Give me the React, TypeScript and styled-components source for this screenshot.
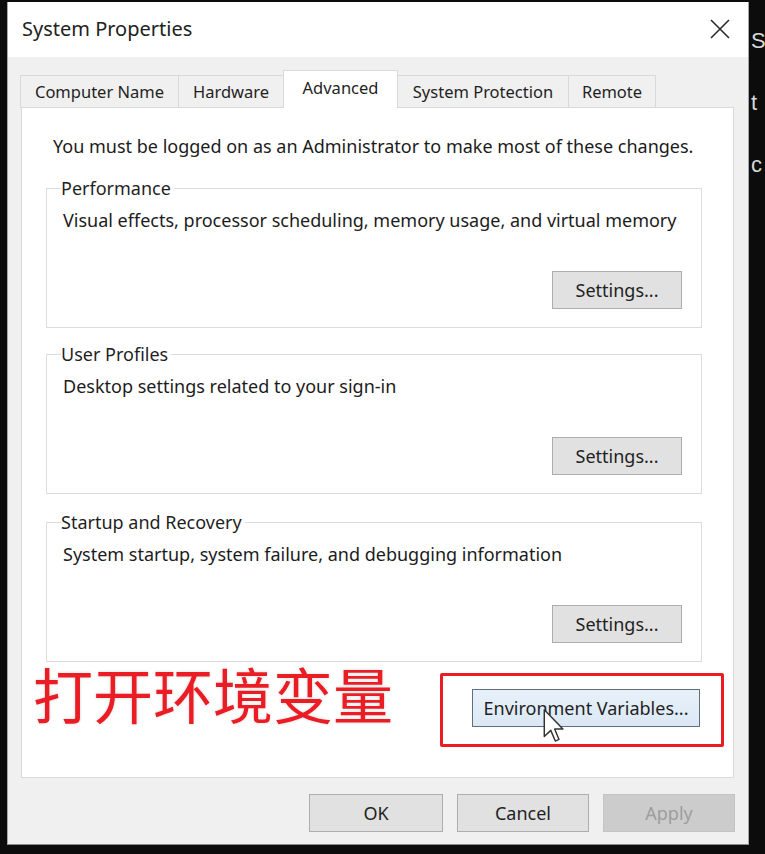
import React from "react";
import styled, { createGlobalStyle } from "styled-components";

const Global = createGlobalStyle`
  html, body { margin: 0; padding: 0; background: #0c0c0c; }
  body { font-family: "Noto Sans", "Open Sans", Arial, sans-serif; }
  * { box-sizing: border-box; }
`;

const Page = styled.div`
  width: 765px;
  height: 854px;
  display: flex;
  background: #0c0c0c;
  overflow: hidden;
`;

const LeftStrip = styled.div`
  width: 7px;
  flex: none;
`;

const RightStrip = styled.div`
  flex: 1;
  display: flex;
  flex-direction: column;
  padding-top: 10px;
  padding-left: 2px;
`;

const Ghost = styled.span`
  font-family: "Liberation Sans", Arial, sans-serif;
  font-size: 22px;
  line-height: 62px;
  color: #d8d8d8;
`;

const Window = styled.div`
  width: 742px;
  height: 843px;
  margin-top: 2px;
  flex: none;
  background: #f0f0f0;
  border-left: 1px solid #a8a8a8;
  border-right: 1px solid #a8a8a8;
  border-bottom: 1px solid #8a8a8a;
  display: flex;
  flex-direction: column;
  color: #1c1c1c;
`;

const TitleBar = styled.div`
  height: 55px;
  flex: none;
  background: #ffffff;
  display: flex;
  align-items: center;
  justify-content: space-between;
  padding: 0 17px 2px 14px;
`;

const Title = styled.div`
  font-size: 20px;
  color: #222;
`;

const CloseBtn = styled.div`
  width: 22px;
  height: 22px;
  display: flex;
  align-items: center;
  justify-content: center;
`;

const TabRow = styled.div`
  display: flex;
  align-items: flex-end;
  height: 38px;
  margin: 13px 0 -1px 13px;
  position: relative;
  z-index: 1;
`;

const Tab = styled.div<{ $w: number; $active?: boolean }>`
  width: ${(p) => p.$w}px;
  height: ${(p) => (p.$active ? 38 : 33)}px;
  margin-left: -1px;
  background: ${(p) => (p.$active ? "#ffffff" : "#f0f0f0")};
  border: 1px solid #d9d9d9;
  border-bottom: ${(p) => (p.$active ? "none" : "1px solid #d9d9d9")};
  display: flex;
  align-items: center;
  justify-content: center;
  padding-bottom: ${(p) => (p.$active ? 4 : 0)}px;
  font-size: 16.5px;
  color: #1f1f1f;
  white-space: nowrap;
  position: relative;
  z-index: ${(p) => (p.$active ? 2 : 1)};
`;

const Panel = styled.div`
  width: 713px;
  height: 671px;
  margin-left: 13px;
  background: #ffffff;
  border: 1px solid #d9d9d9;
  padding: 27px 31px 0 24px;
  display: flex;
  flex-direction: column;
`;

const Notice = styled.div`
  font-size: 18px;
  line-height: 22px;
  margin-left: 7px;
  white-space: nowrap;
`;

const Group = styled.fieldset<{ $top: number }>`
  margin: ${(p) => p.$top}px 0 0 0;
  padding: 0 19px 0 14px;
  border: 1px solid #dcdcdc;
  height: 151px;
  min-width: 0;
`;

const Legend = styled.legend`
  font-size: 18px;
  line-height: 22px;
  padding: 0 3px 0 0;
  color: #1f1f1f;
`;

const Desc = styled.div`
  font-size: 18px;
  line-height: 22px;
  margin-top: 10px;
  margin-left: 2px;
  white-space: nowrap;
`;

const ButtonRow = styled.div`
  display: flex;
  justify-content: flex-end;
  margin-top: 40px;
`;

const Button = styled.div<{ $w: number; $disabled?: boolean }>`
  width: ${(p) => p.$w}px;
  height: 38px;
  display: flex;
  align-items: center;
  justify-content: center;
  font-size: 18px;
  background: ${(p) => (p.$disabled ? "#cccccc" : "#e1e1e1")};
  border: 1px solid ${(p) => (p.$disabled ? "#c4c4c4" : "#adadad")};
  color: ${(p) => (p.$disabled ? "#9d9d9d" : "#1f1f1f")};
  white-space: nowrap;
`;

const EnvRow = styled.div`
  display: flex;
  justify-content: space-between;
  align-items: flex-start;
  margin: 11px -22px 0 -13px;
`;

const Caption = styled.div`
  font-family: "Noto Sans CJK SC", "Noto Sans", sans-serif;
  font-size: 60px;
  line-height: 58px;
  margin-top: -9px;
  letter-spacing: 0px;
  color: #ea1c24;
  text-shadow: 0 0 2px #ffffff, 0 0 3px #c8c8c8;
  white-space: nowrap;
`;

const Highlight = styled.div`
  border: 3px solid #ec1c24;
  border-radius: 2px;
  padding: 13px 21px 17px 29px;
  display: flex;
`;

const EnvButton = styled.div`
  width: 228px;
  height: 38px;
  display: flex;
  align-items: center;
  justify-content: center;
  font-size: 18px;
  background: linear-gradient(#e8f1fa, #dbe8f4);
  border: 1px solid #5f6f80;
  color: #1f1f1f;
  position: relative;
  white-space: nowrap;
`;

const Cursor = styled.svg`
  position: absolute;
  left: 70px;
  top: 19px;
`;

const Footer = styled.div`
  display: flex;
  justify-content: flex-end;
  gap: 14px;
  margin-top: 16px;
  padding-right: 13px;
`;

const groups = [
  {
    title: "Performance",
    desc: "Visual effects, processor scheduling, memory usage, and virtual memory",
    top: 20,
  },
  { title: "User Profiles", desc: "Desktop settings related to your sign-in", top: 15 },
  {
    title: "Startup and Recovery",
    desc: "System startup, system failure, and debugging information",
    top: 17,
  },
];

const tabs = [
  { label: "Computer Name", w: 159 },
  { label: "Hardware", w: 106 },
  { label: "Advanced", w: 115, active: true },
  { label: "System Protection", w: 172 },
  { label: "Remote", w: 88 },
];

export default function App() {
  return (
    <Page>
      <Global />
      <LeftStrip />
      <Window>
        <TitleBar>
          <Title>System Properties</Title>
          <CloseBtn>
            <svg width="20" height="20" viewBox="0 0 20 20">
              <path d="M1 1 L19 19 M19 1 L1 19" stroke="#2a2a2a" strokeWidth="1.6" fill="none" />
            </svg>
          </CloseBtn>
        </TitleBar>
        <TabRow>
          {tabs.map((t) => (
            <Tab key={t.label} $w={t.w} $active={t.active}>
              {t.label}
            </Tab>
          ))}
        </TabRow>
        <Panel>
          <Notice>You must be logged on as an Administrator to make most of these changes.</Notice>
          {groups.map((g) => (
            <Group key={g.title} $top={g.top}>
              <Legend>{g.title}</Legend>
              <Desc>{g.desc}</Desc>
              <ButtonRow>
                <Button $w={130}>Settings...</Button>
              </ButtonRow>
            </Group>
          ))}
          <EnvRow>
            <Caption>打开环境变量</Caption>
            <Highlight>
              <EnvButton>
                Environment Variables...
                <Cursor width="22" height="34" viewBox="0 0 13 21">
                  <path
                    d="M0.5 0.5 L0.5 17 L4.5 13.2 L7.3 19.8 L9.6 18.8 L6.9 12.4 L12 12.4 Z"
                    fill="#ffffff"
                    stroke="#333"
                    strokeWidth="0.9"
                    strokeLinejoin="round"
                  />
                </Cursor>
              </EnvButton>
            </Highlight>
          </EnvRow>
        </Panel>
        <Footer>
          <Button $w={134}>OK</Button>
          <Button $w={132}>Cancel</Button>
          <Button $w={132} $disabled>
            Apply
          </Button>
        </Footer>
      </Window>
      <RightStrip>
        <Ghost>S</Ghost>
        <Ghost>t</Ghost>
        <Ghost>c</Ghost>
      </RightStrip>
    </Page>
  );
}
